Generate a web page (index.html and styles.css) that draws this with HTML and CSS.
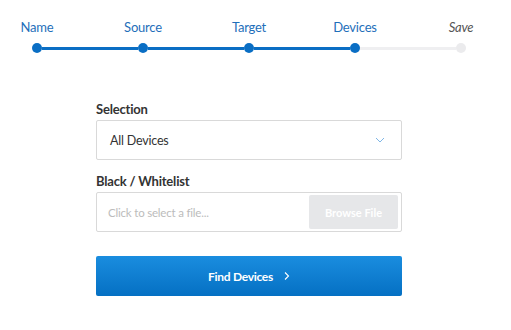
FILE: index.html
```html
<!DOCTYPE html>
<html lang="en">
<head>
<meta charset="UTF-8" />
<meta name="viewport" content="width=device-width, initial-scale=1" />
<title>Find Devices</title>
<link rel="stylesheet" href="styles.css">
</head>
<body>
  <!-- Wizard steps -->
  <div class="steps">
    <div class="step-labels">
      <span class="step-label">Name</span>
      <span class="step-label">Source</span>
      <span class="step-label">Target</span>
      <span class="step-label">Devices</span>
      <span class="step-label todo">Save</span>
    </div>
    <div class="step-track">
      <span class="dot"></span><span class="bar"></span>
      <span class="dot"></span><span class="bar"></span>
      <span class="dot"></span><span class="bar"></span>
      <span class="dot"></span><span class="bar todo"></span>
      <span class="dot todo"></span>
    </div>
  </div>

  <form class="form">
    <label class="field-label">Selection</label>
    <div class="select">
      <span>All Devices</span>
      <svg class="chev" width="10" height="6" viewBox="0 0 10 6"><path d="M1 1l4 4 4-4" fill="none" stroke="#7fb6e6" stroke-width="1"/></svg>
    </div>

    <label class="field-label">Black / Whitelist</label>
    <div class="file">
      <span class="placeholder">Click to select a file...</span>
      <span class="browse">Browse File</span>
    </div>

    <button type="button" class="find">Find Devices
      <svg width="6" height="10" viewBox="0 0 6 10"><path d="M1 1.5l3.5 3.5-3.5 3.5" fill="none" stroke="#fff" stroke-width="1.1"/></svg>
    </button>
  </form>
</body>
</html>
```
FILE: styles.css
```css
* { box-sizing: border-box; margin: 0; padding: 0; }
body {
  font-family: 'Lato', 'Open Sans', sans-serif;
  background: #fff;
  color: #333;
  width: 511px; height: 330px; overflow: hidden;
}

/* Steps */
.steps { padding-top: 19px; }
.step-labels { display: flex; margin-left: -16px; }
.step-label {
  width: 106px; flex: none; text-align: center;
  font-size: 13px; line-height: 16px; color: #1f6fba;
  letter-spacing: -0.2px;
}
.step-label.todo { font-style: italic; color: #555; }
.step-track {
  display: flex; align-items: center;
  margin-left: 32px; margin-top: 8px;
}
.dot { width: 10px; height: 10px; border-radius: 50%; background: #0a6ec4; flex: none; }
.bar { width: 96px; height: 3px; background: #0a6ec4; flex: none; }
.dot.todo { background: #ebebed; }
.bar.todo { background: #efeff1; }

/* Form */
.form {
  display: flex; flex-direction: column;
  width: 306px; margin: 48px 0 0 96px;
}
.field-label {
  font-size: 13px; font-weight: 700; color: #333; line-height: 16px;
  margin-bottom: 3px; letter-spacing: -0.2px;
}
.select, .file {
  height: 40px; border: 1px solid #d9d9d9; border-radius: 2px;
  display: flex; align-items: center; margin-bottom: 13px;
}
.select {
  justify-content: space-between; padding: 0 16px 0 13px;
  font-size: 12.5px; color: #333; letter-spacing: -0.2px;
}
.file { padding: 2px 3px 2px 11px; justify-content: space-between; margin-bottom: 24px; }
.placeholder { font-size: 11.5px; color: #bcbcbc; letter-spacing: -0.2px; }
.browse {
  width: 89px; height: 34px; background: #e6e7e9; border-radius: 2px;
  color: #fff; font-size: 11px; font-weight: 700;
  display: flex; align-items: center; justify-content: center;
}
.find {
  height: 40px; border: 0; border-radius: 2px;
  background: linear-gradient(#1a8ddf, #0570c3);
  color: #fff; font-family: inherit; font-size: 12px; font-weight: 700;
  letter-spacing: -0.3px;
  display: flex; align-items: center; justify-content: center; gap: 11px;
}
```
